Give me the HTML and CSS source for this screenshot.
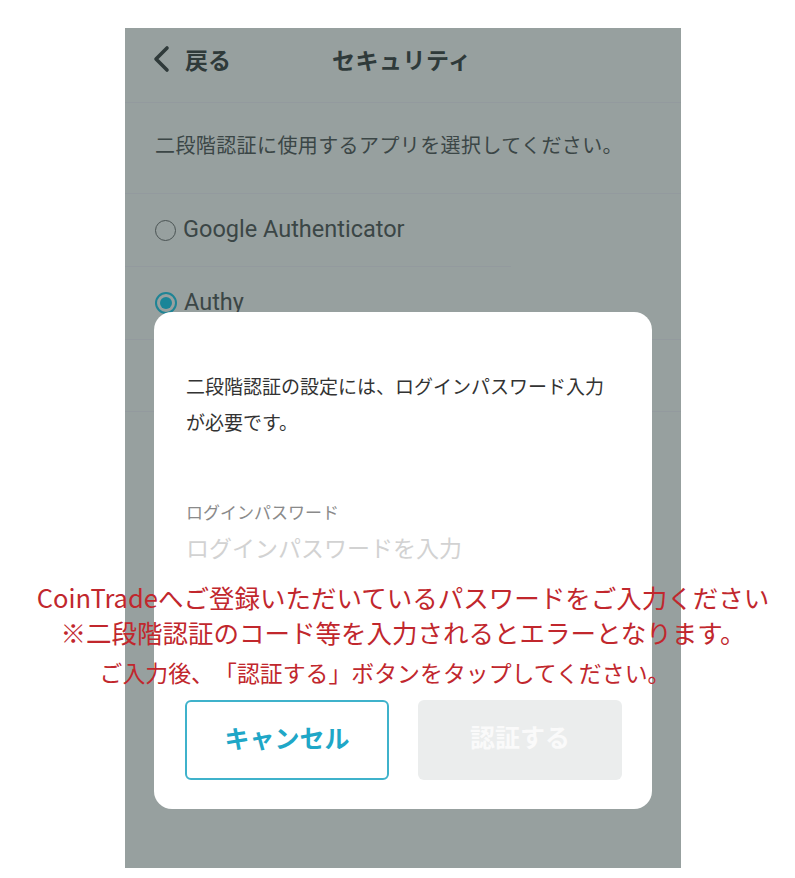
FILE: index.html
```html
<!DOCTYPE html>
<html>
<head>
    <meta charset="UTF-8">
    <title>セキュリティ</title>
    <link rel="stylesheet" href="styles.css">
</head>
<body>
<section class="phone">
    <div class="header">
        <div class="back">
            <svg class="chevron" width="20" height="28" viewBox="0 0 20 28">
                <polyline points="15,3 4,14 15,25" fill="none" stroke="#2f3a3a" stroke-width="3.6" stroke-linecap="round" stroke-linejoin="round"/>
            </svg>
            <span>戻る</span>
        </div>
        <div class="title">セキュリティ</div>
    </div>

    <div class="intro">二段階認証に使用するアプリを選択してください。</div>

    <div class="option">
        <em class="radio"></em>
        <span>Google Authenticator</span>
    </div>
    <div class="line short"></div>

    <div class="option">
        <em class="radio checked"></em>
        <span>Authy</span>
    </div>
    <div class="line"></div>
    <div class="spacer"></div>
    <div class="line"></div>

    <!--パスワード入力モーダル-->
    <div class="modal">
        <p class="message">二段階認証の設定には、ログインパスワード入力が必要です。</p>
        <div class="label">ログインパスワード</div>
        <div class="placeholder">ログインパスワードを入力</div>

        <div class="buttons">
            <div class="btn cancel">キャンセル</div>
            <div class="btn submit">認証する</div>
        </div>
    </div>
</section>

<div class="notice">
    <p class="n1">CoinTradeへご登録いただいているパスワードをご入力ください</p>
    <p class="n2">※二段階認証のコード等を入力されるとエラーとなります。</p>
    <p class="n3">ご入力後、「認証する」ボタンをタップしてください。</p>
</div>
</body>
</html>
```

FILE: styles.css
```css
* {
    margin: 0;
    padding: 0;
    font-family: Roboto, "Noto Sans CJK JP", sans-serif;
    color: #3b4646;
    text-spacing-trim: space-all;
}

html, body {
    width: 100%;
    overflow-x: hidden;
    background: #fff;
}

.phone {
    position: relative;
    margin: 28px 0 0 125px;
    width: 556px;
    height: 840px;
    background: #97a09f;
    overflow: hidden;
}

.header {
    display: flex;
    align-items: center;
    height: 75px;
    padding: 0 0 0 27px;
    border-bottom: 1px solid #939a9e;
    box-sizing: border-box;
}

.back {
    display: flex;
    align-items: center;
    margin-top: -13px;
}

.back span {
    margin-left: 13px;
    font-size: 23px;
    font-weight: bold;
    color: #2f3a3a;
}

.chevron {
    display: block;
}

.title {
    margin: -13px 0 0 101px;
    font-size: 23px;
    font-weight: bold;
    color: #2f3a3a;
    letter-spacing: 0.5px;
}

.intro {
    height: 90px;
    line-height: 86px;
    padding-left: 30px;
    font-size: 20px;
    letter-spacing: 0.4px;
    border-bottom: 1px solid #939a9e;
}

.option {
    display: flex;
    align-items: center;
    height: 72px;
    padding-left: 30px;
    font-size: 23.5px;
}

.option span {
    margin-left: 7px;
    margin-top: -2px;
}

.radio {
    display: block;
    width: 19px;
    height: 19px;
    border: 1.6px solid #4a5353;
    border-radius: 50%;
}

.radio.checked {
    position: relative;
    border: 2px solid #1f8495;
    width: 18px;
    height: 18px;
}

.radio.checked:after {
    content: "";
    position: absolute;
    left: 3px;
    top: 3px;
    width: 12px;
    height: 12px;
    border-radius: 50%;
    background: #1a8598;
}

.line {
    height: 1px;
    background: #939a9e;
}

.line.short {
    width: 386px;
}

.spacer {
    height: 71px;
}

.modal {
    position: absolute;
    left: 29px;
    top: 284px;
    display: flex;
    flex-direction: column;
    width: 498px;
    height: 497px;
    padding: 58px 30px 29px 32px;
    box-sizing: border-box;
    background: #fff;
    border-radius: 18px;
}

.message {
    width: 425px;
    font-size: 19px;
    line-height: 36px;
    color: #333;
}

.label {
    margin-top: 59px;
    font-size: 17px;
    line-height: 24px;
    color: #8a8a8a;
}

.placeholder {
    margin-top: 9px;
    font-size: 23px;
    line-height: 32px;
    color: #d2d2d2;
}

.buttons {
    display: flex;
    justify-content: space-between;
    margin-top: auto;
}

.btn {
    width: 204px;
    height: 80px;
    line-height: 76px;
    text-align: center;
    font-size: 25px;
    font-weight: bold;
    border-radius: 6px;
    box-sizing: border-box;
}

.cancel {
    margin-left: -1px;
    border: 2px solid #3fb2cb;
    color: #1fa7c7;
}

.submit {
    background: #ebeded;
    color: #fafafa;
    line-height: 78px;
}

.notice {
    position: absolute;
    left: 0;
    top: 580px;
    width: 806px;
    text-align: center;
}

.notice p {
    font-family: "Noto Sans CJK JP", sans-serif;
    color: #c1272d;
    font-weight: normal;
    white-space: nowrap;
}

.n1 {
    font-size: 25.5px;
    line-height: 34px;
}

.n2 {
    font-size: 25.5px;
    line-height: 36px;
}

.n3 {
    margin-top: 4px;
    padding-right: 36px;
    font-size: 22.9px;
    line-height: 36px;
}
```
